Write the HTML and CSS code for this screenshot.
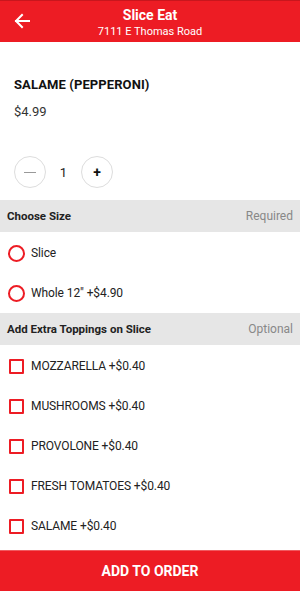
FILE: index.html
```html
<!DOCTYPE html>
<html>
<head>
<meta charset="utf-8">
<link rel="stylesheet" href="styles.css">
</head>
<body>
<div class="app">
  <header class="topbar">
    <button class="back" aria-label="Back">
      <svg width="16" height="16" viewBox="0 0 16 16"><path d="M15 8H2M8 2L2 8l6 6" fill="none" stroke="#fff" stroke-width="2" stroke-linecap="square"/></svg>
    </button>
    <div class="titles">
      <div class="title">Slice Eat</div>
      <div class="subtitle">7111 E Thomas Road</div>
    </div>
  </header>
  <main class="content">
    <section class="product">
      <h1 class="name">SALAME (PEPPERONI)</h1>
      <div class="price">$4.99</div>
    </section>
    <div class="qty">
      <button class="qbtn"><span class="minus"></span></button>
      <span class="count">1</span>
      <button class="qbtn plus">+</button>
    </div>
    <div class="group-head"><span class="gtitle">Choose Size</span><span class="gnote">Required</span></div>
    <div class="opt"><span class="radio"></span><span>Slice</span></div>
    <div class="opt"><span class="radio"></span><span>Whole 12" +$4.90</span></div>
    <div class="group-head"><span class="gtitle">Add Extra Toppings on Slice</span><span class="gnote">Optional</span></div>
    <div class="opt"><span class="check"></span><span>MOZZARELLA +$0.40</span></div>
    <div class="opt"><span class="check"></span><span>MUSHROOMS +$0.40</span></div>
    <div class="opt"><span class="check"></span><span>PROVOLONE +$0.40</span></div>
    <div class="opt"><span class="check"></span><span>FRESH TOMATOES +$0.40</span></div>
    <div class="opt"><span class="check"></span><span>SALAME +$0.40</span></div>
  </main>
  <button class="add">ADD TO ORDER</button>
</div>
</body>
</html>
```
FILE: styles.css
```css
* { box-sizing: border-box; }
html, body { margin: 0; padding: 0; }
body { font-family: Roboto, "Noto Sans", sans-serif; color: #222; background: #fff; }
.app { width: 300px; height: 591px; display: flex; flex-direction: column; overflow: hidden; }
.topbar { height: 42px; background: #ed1c24; border-top: 1px solid #c8161d; display: flex; align-items: center; position: relative; flex: none; }
.back { position: absolute; left: 14px; top: 12px; width: 16px; height: 16px; padding: 0; border: 0; background: none; display: flex; }
.titles { flex: 1; text-align: center; color: #fff; padding-top: 2px; }
.title { font-weight: 700; font-size: 14px; line-height: 16px; }
.subtitle { font-size: 11px; line-height: 14px; margin-top: 2px; }
.content { flex: 1; }
.product { padding: 34px 14px 0; }
.name { margin: 0; font-size: 13px; font-weight: 700; line-height: 18px; color: #111; letter-spacing: 0.1px; }
.price { margin-top: 9px; font-size: 13px; line-height: 18px; color: #333; }
.qty { display: flex; align-items: center; padding: 34px 0 0 14px; height: 68px; }
.qbtn { width: 32px; height: 32px; border-radius: 50%; border: 1px solid #ddd; background: #fff; padding: 0; display: flex; align-items: center; justify-content: center; font-family: Roboto, sans-serif; font-size: 14px; font-weight: 700; color: #111; }
.minus { width: 12px; height: 1px; background: #999; }
.count { width: 35px; text-align: center; font-size: 13px; color: #222; }
.group-head { height: 32px; background: #e6e6e6; display: flex; align-items: center; justify-content: space-between; padding: 0 7px; font-size: 11.5px; }
.qty + .group-head { margin-top: 11px; }
.gtitle { font-weight: 700; color: #222; }
.gnote { color: #888; font-size: 12px; }
.opt { height: 40px; display: flex; align-items: center; padding-left: 8px; font-size: 12px; color: #222; letter-spacing: -0.1px; }
.group-head + .opt { margin-top: 1px; }
.radio { width: 17px; height: 17px; border: 2px solid #ed1c24; border-radius: 50%; margin-right: 6px; flex: none; }
.check { width: 15px; height: 15px; border: 2px solid #ed1c24; border-radius: 1px; margin: 0 7px 0 1px; flex: none; }
.add { height: 41px; flex: none; width: 100%; border: 0; border-top: 1px solid #f05a5f; background: #ed1c24; color: #fff; font-family: Roboto, sans-serif; font-weight: 700; font-size: 14px; }
```
